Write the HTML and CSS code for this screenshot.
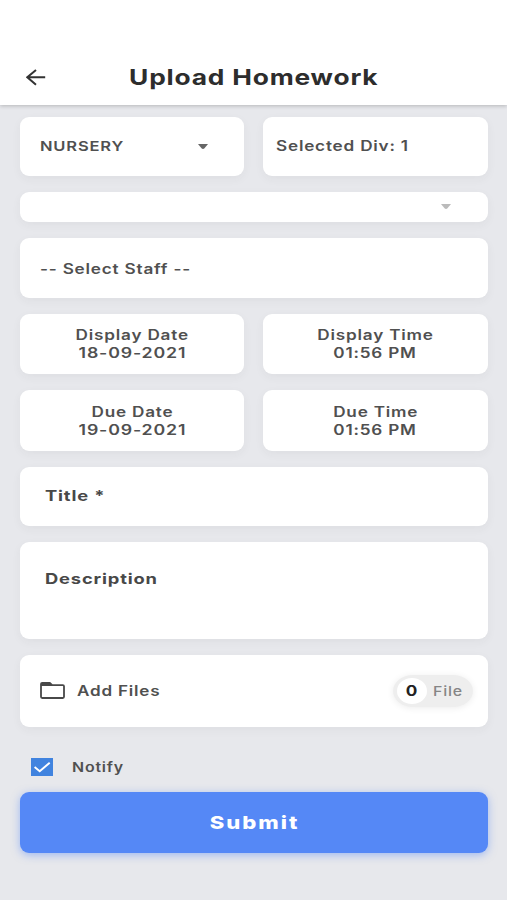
FILE: index.html
```html
<!DOCTYPE html>
<html lang="en">
<head>
<meta charset="utf-8">
<title>Upload Homework</title>
<link rel="stylesheet" href="styles.css">
</head>
<body>
<header class="header">
  <svg class="back" viewBox="0 0 20 17"><path d="M19.2 8.3H1.3M10 1 1.3 8.3 10 15.8" fill="none" stroke="#333" stroke-width="2"/></svg>
  <h1 class="heading"><span class="text">Upload Homework</span></h1>
</header>
<main class="form">
  <div class="row class-row">
    <div class="card select"><span class="text caps">NURSERY</span><svg class="caret" viewBox="0 0 10 5"><path d="M0 0h10L6.5 4.2Q5 5.6 3.5 4.2z"/></svg></div>
    <div class="card division"><span class="text">Selected Div: 1</span></div>
  </div>
  <div class="card subject"><svg class="caret" viewBox="0 0 10 5"><path d="M0 0h10L6.5 4.2Q5 5.6 3.5 4.2z"/></svg></div>
  <div class="card staff"><span class="text">-- Select Staff --</span></div>
  <div class="row">
    <div class="card moment"><span class="text">Display Date</span><span class="text date">18-09-2021</span></div>
    <div class="card moment"><span class="text">Display Time</span><span class="text">01:56 PM</span></div>
  </div>
  <div class="row">
    <div class="card moment"><span class="text">Due Date</span><span class="text date">19-09-2021</span></div>
    <div class="card moment"><span class="text">Due Time</span><span class="text">01:56 PM</span></div>
  </div>
  <div class="card title"><span class="text">Title *</span></div>
  <div class="card description"><span class="text">Description</span></div>
  <div class="card files">
    <svg class="folder" viewBox="0 0 25 17"><path d="M2.2 1h7.6l2.4 2.2h10.6q1.2 0 1.2 1.1v10.5q0 1.2-1.2 1.2H2.2Q1 16 1 14.8V2.1Q1 1 2.2 1z" fill="none" stroke="#484848" stroke-width="1.8"/><path d="M1 1h9l2 2v1H1z" fill="#484848"/></svg>
    <span class="text">Add Files</span>
    <div class="pill"><div class="count"><span class="text">0</span></div><span class="text unit">File</span></div>
  </div>
  <div class="notify">
    <svg class="check" viewBox="0 0 22 18"><path d="M0 0h22v18H0z" fill="#4083df"/><path d="M3.6 9.1 8.7 13.2 18.7 4.7" fill="none" stroke="#fff" stroke-width="1.9"/></svg>
    <span class="text">Notify</span>
  </div>
  <div class="submit"><span class="text">Submit</span></div>
</main>
</body>
</html>
```

FILE: styles.css
```css
* { box-sizing: border-box; }
body {
  margin: 0;
  height: 900px;
  background: #e7e8ec;
  color: #505050;
  font: 580 14px/18px Inter, "Liberation Sans", sans-serif;
  letter-spacing: 0.65px;
  overflow: hidden;
}
svg { display: block; flex: none; }
/* Lettering is drawn extended horizontally. */
.text {
  display: inline-block;
  transform: scaleX(1.225);
  transform-origin: left center;
  white-space: pre;
}
.header {
  height: 105px;
  padding-top: 50px;
  display: grid;
  grid-template-columns: 70px 1fr 70px;
  align-items: center;
  background: #fff;
  box-shadow: 0 1px 4px rgba(0, 0, 0, 0.22);
}
.back { width: 20px; height: 17px; margin-left: 25.5px; }
.heading {
  margin: 0;
  padding-bottom: 1px;
  color: #2d2d2d;
  font-size: 21.5px;
  line-height: 26px;
  font-weight: 670;
  text-align: center;
}
.heading .text, .moment .text, .submit .text { transform-origin: center; }
.form {
  display: flex;
  flex-direction: column;
  gap: 16px;
  padding: 12.3px 19.5px 0 20px;
}
.row { display: grid; grid-template-columns: 1fr 1fr; gap: 19px; height: 60.3px; }
.card {
  display: flex;
  align-items: center;
  background: #fff;
  border-radius: 9px;
  box-shadow: 0 3px 10px rgba(50, 50, 60, 0.05);
}
.class-row { height: 58.3px; }
.select { justify-content: space-between; padding: 0 36.5px 0 20px; }
.caps { font-size: 13.5px; }
.caret { width: 10px; height: 5px; fill: #666; }
.division { padding-left: 13px; }
.subject { height: 30.2px; justify-content: flex-end; padding-right: 37px; }
.subject .caret { fill: #bbb; }
.staff { height: 60.3px; padding: 2px 0 0 20px; }
.moment { flex-direction: column; justify-content: center; padding-top: 0.4px; }
.date { transform: scaleX(1.27); }
.title { height: 59.3px; padding-left: 25px; color: #484848; }
.description { height: 97px; padding: 28px 0 0 25px; align-items: flex-start; color: #484848; }
.title .text, .description .text { font-size: 14.5px; font-weight: 650; transform: scaleX(1.265); }
.files { height: 72px; padding: 0 14.5px 0 20px; }
.files > .text { transform: scaleX(1.22); }
.folder { width: 25px; height: 17px; margin-right: 12px; }
.pill {
  display: flex;
  align-items: center;
  width: 80px;
  height: 32px;
  margin-left: auto;
  padding-left: 4px;
  border-radius: 20px / 16px;
  background: #eee;
  box-shadow: 0 1px 7px rgba(0, 0, 0, 0.08);
}
.count {
  display: grid;
  place-items: center;
  width: 30px;
  height: 26px;
  margin-right: 6px;
  border-radius: 50%;
  background: #fff;
  color: #222;
  font-weight: 700;
}
.count .text { transform-origin: center; }
.unit { color: #858585; font-size: 13px; font-weight: 500; }
.notify { display: flex; align-items: center; height: 18px; margin-top: 15px; padding-left: 11px; }
.check { width: 22px; height: 18px; margin-right: 19px; }
.notify .text { font-size: 13px; }
.submit {
  display: grid;
  place-items: center;
  height: 61px;
  padding: 1px 0 0 2px;
  border-radius: 9px;
  margin-top: -0.3px;
  background: #5588f6;
  box-shadow: 0 2px 9px rgba(85, 136, 246, 0.5);
  color: #fff;
  font-size: 18px;
  font-weight: 850;
  letter-spacing: 1.6px;
}
```
